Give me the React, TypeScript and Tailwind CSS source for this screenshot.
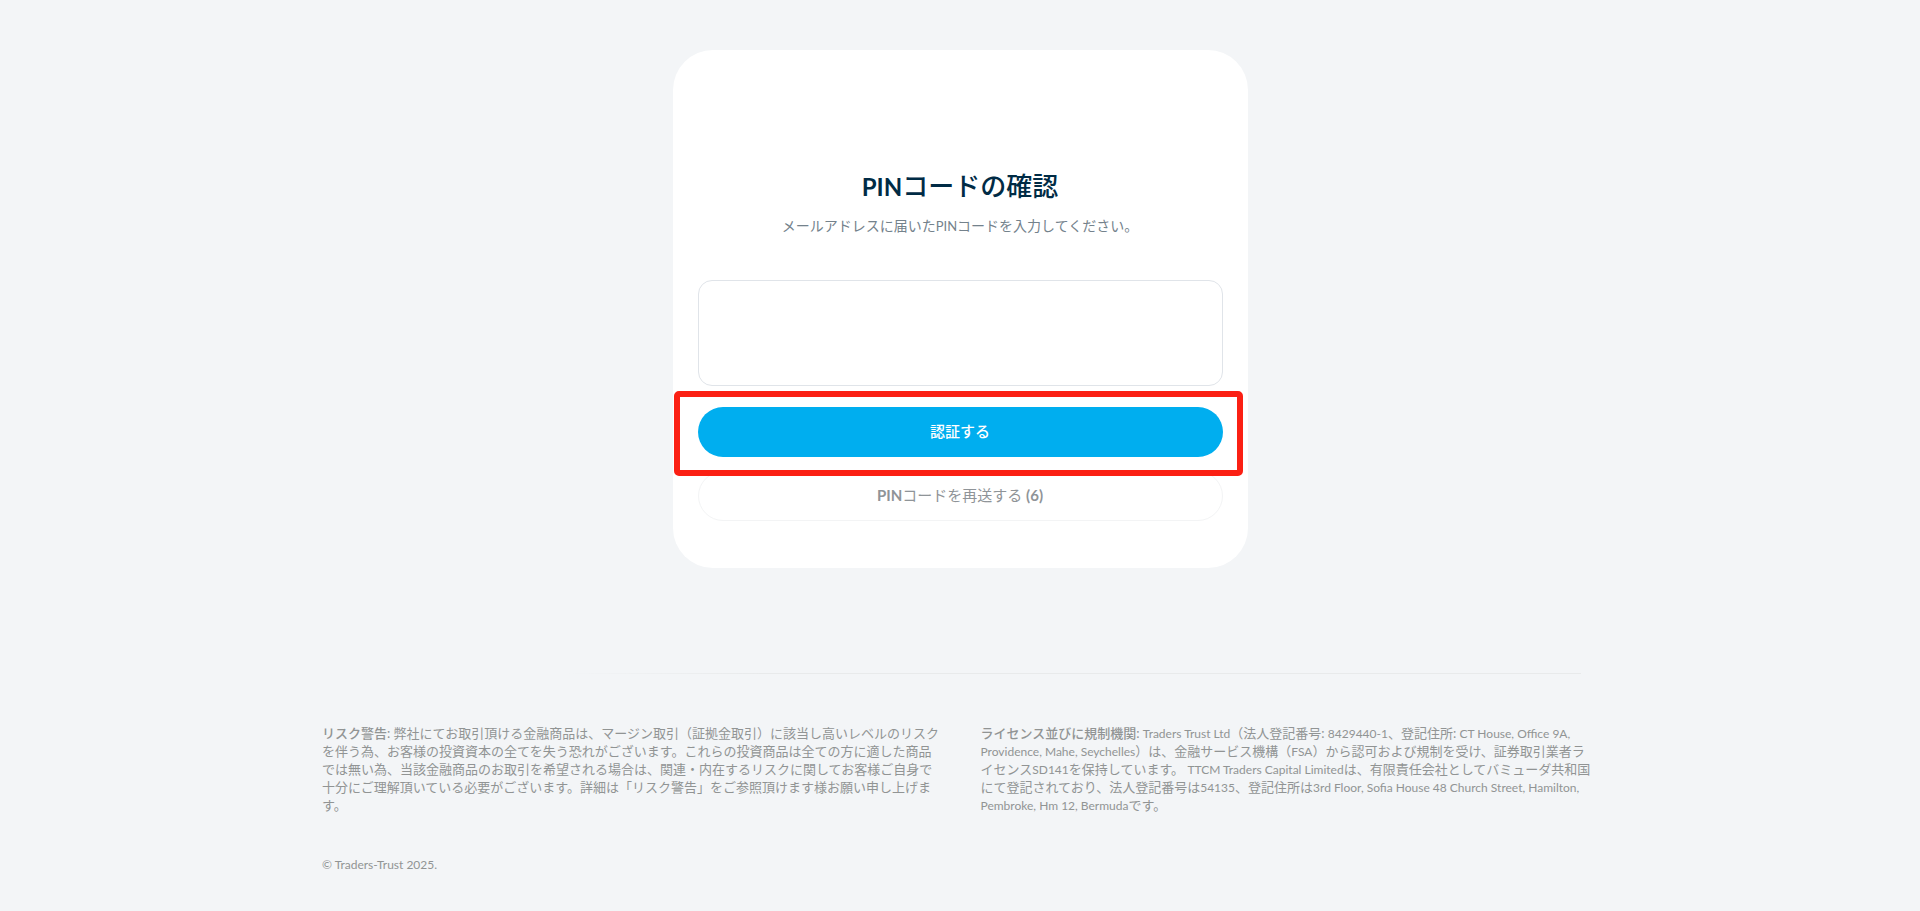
// PIN confirmation page
// White card with the code box and two actions, legal notes underneath.

import { useState, type ReactNode } from 'react';

// Latin runs sit one step smaller than the Japanese around them
function En({ children }: { children: ReactNode }) {
  return <span className="text-[12px] leading-none">{children}</span>;
}

function PinCard() {
  const [pin, setPin] = useState('');

  return (
    <section className="flex w-full max-w-[575px] flex-col rounded-[40px] bg-white px-[25px] pt-[119px] pb-[47px]">
      <h1 className="text-center text-[26px] leading-[34px] font-medium text-[#002b45]">
        <span className="text-[24px] leading-none font-bold">PIN</span>コードの確認
      </h1>
      <label htmlFor="pin" className="mt-[13px] text-center text-[14px] leading-[20px] text-[#74828c]">
        メールアドレスに届いた<span className="text-[13px] leading-none">PIN</span>コードを入力してください。
      </label>

      <input
        id="pin"
        type="text"
        inputMode="numeric"
        autoComplete="one-time-code"
        value={pin}
        onChange={(e) => setPin(e.target.value)}
        className="mt-[44px] h-[106px] w-full rounded-[14px] border border-[#e0e4e9] bg-white text-center text-[40px] text-[#002b45] outline-none"
      />

      {/* primary action with its red marker frame */}
      <div className="relative mt-[21px]">
        <button
          type="button"
          className="block h-[50px] w-full rounded-full bg-[#00aeef] pb-[2px] text-[15px] leading-[20px] font-medium text-white"
        >
          認証する
        </button>
        <div
          className="pointer-events-none absolute -top-[16px] -right-[20px] -bottom-[19px] -left-[24px] z-10 rounded-[5px] border-[6px] border-[#fb2014]"
          aria-hidden
        />
      </div>

      <button
        type="button"
        className="mt-[14px] h-[50px] w-full rounded-full border border-[#f3f4f5] bg-white pb-[2px] text-[15px] leading-[20px] text-[#8f9498]"
      >
        <span className="font-bold">PIN</span>コードを再送する <span className="font-bold">(6)</span>
      </button>
    </section>
  );
}

function Footer() {
  return (
    <footer className="mt-[105px] w-full max-w-[1316px] px-[20px] text-[13px] leading-[18px] text-[#919494]">
      <div className="mr-[17px] ml-[242px] h-px bg-linear-to-r from-transparent via-[#e8eaeb] via-20% to-[#e8eaeb]" />
      <div className="mt-[50px] grid grid-cols-2 gap-[41px]">
        <p>
          <span className="font-medium">リスク警告:</span>{' '}
          弊社にてお取引頂ける金融商品は、マージン取引（証拠金取引）に該当し高いレベルのリスクを伴う為、お客様の投資資本の全てを失う恐れがございます。これらの投資商品は全ての方に適した商品では無い為、当該金融商品のお取引を希望される場合は、関連・内在するリスクに関してお客様ご自身で十分にご理解頂いている必要がございます。詳細は「リスク警告」をご参照頂けます様お願い申し上げます。
        </p>
        <p className="pr-[3px]">
          <span className="font-medium">ライセンス並びに規制機関:</span> <En>Traders Trust Ltd</En>
          （法人登記番号: <En>8429440-1</En>、登記住所:{' '}
          <En>CT House, Office 9A, Providence, Mahe, Seychelles</En>
          ）は、金融サービス機構（<En>FSA</En>）から認可および規制を受け、証券取引業者ライセンス
          <En>SD141</En>を保持しています。 <En>TTCM Traders Capital Limited</En>
          は、有限責任会社としてバミューダ共和国にて登記されており、法人登記番号は<En>54135</En>
          、登記住所は<En>3rd Floor, Sofia House 48 Church Street, Hamilton, Pembroke, Hm 12, Bermuda</En>
          です。
        </p>
      </div>
      <p className="mt-[42px] pb-[36px] text-[12px]">© Traders-Trust 2025.</p>
    </footer>
  );
}

export default function App() {
  return (
    <main
      lang="ja"
      className="flex min-h-screen flex-col items-center bg-[#f3f5f7] pt-[50px] font-['Lato','Noto_Sans_CJK_JP',sans-serif]"
    >
      <PinCard />
      <Footer />
    </main>
  );
}
